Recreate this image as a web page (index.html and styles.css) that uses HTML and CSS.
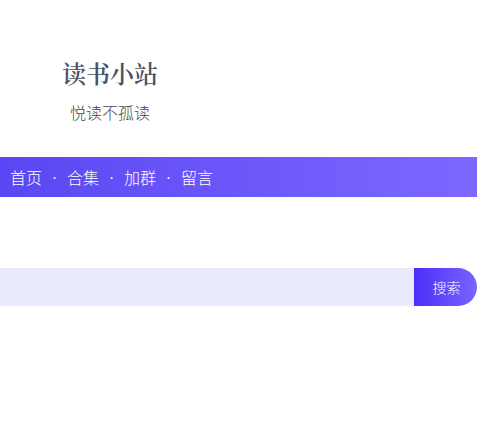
FILE: index.html
```html
<!DOCTYPE html>
<html lang="zh">
<head>
<meta charset="utf-8">
<link rel="stylesheet" href="styles.css">
</head>
<body>
<header class="brand">
  <h1 class="title">读书小站</h1>
  <p class="tagline">悦读不孤读</p>
</header>
<nav class="nav">
  <a class="nav-item">首页</a><span class="sep">·</span>
  <a class="nav-item">合集</a><span class="sep">·</span>
  <a class="nav-item">加群</a><span class="sep">·</span>
  <a class="nav-item">留言</a>
</nav>
<form class="search">
  <input class="search-input" type="text">
  <button class="search-btn" type="button">搜索</button>
</form>
</body>
</html>
```
FILE: styles.css
```css
html, body {
  margin: 0;
  padding: 0;
  background: #fff;
  font-family: "Noto Sans CJK SC", "Noto Sans", sans-serif;
}
.brand {
  width: 220px;
  display: flex;
  flex-direction: column;
  align-items: center;
  padding-top: 58px;
}
.title {
  margin: 0;
  font-family: "Noto Serif CJK SC", "Noto Sans CJK SC", serif;
  font-size: 24px;
  font-weight: 600;
  line-height: 30px;
  color: #4a5263;
}
.tagline {
  margin: 13px 0 0;
  font-size: 16px;
  font-weight: 300;
  line-height: 22px;
  color: #444;
}
.nav {
  margin-top: 34px;
  height: 40px;
  display: flex;
  align-items: center;
  padding-left: 10px;
  background: linear-gradient(90deg, #5b47f3 0%, #7c68ff 100%);
  color: #fff;
  font-size: 16px;
}
.nav-item {
  color: #fff;
  line-height: 40px;
  font-weight: 300;
}
.sep {
  width: 25px;
  text-align: center;
  font-size: 10px;
  color: #e8e4ff;
}
.search {
  margin: 71px 0 0;
  display: flex;
  height: 38px;
}
.search-input {
  flex: 1;
  border: 0;
  margin: 0;
  padding: 0;
  background: #e8eafe;
  outline: none;
}
.search-btn {
  width: 63px;
  border: 0;
  margin: 0;
  padding: 0 0 0 2px;
  border-radius: 0 19px 19px 0;
  background: linear-gradient(90deg, #4a2ff9 0%, #7a64ff 100%);
  color: #fff;
  font-family: "Noto Sans CJK SC", sans-serif;
  font-size: 14px;
  font-weight: 300;
}
```
